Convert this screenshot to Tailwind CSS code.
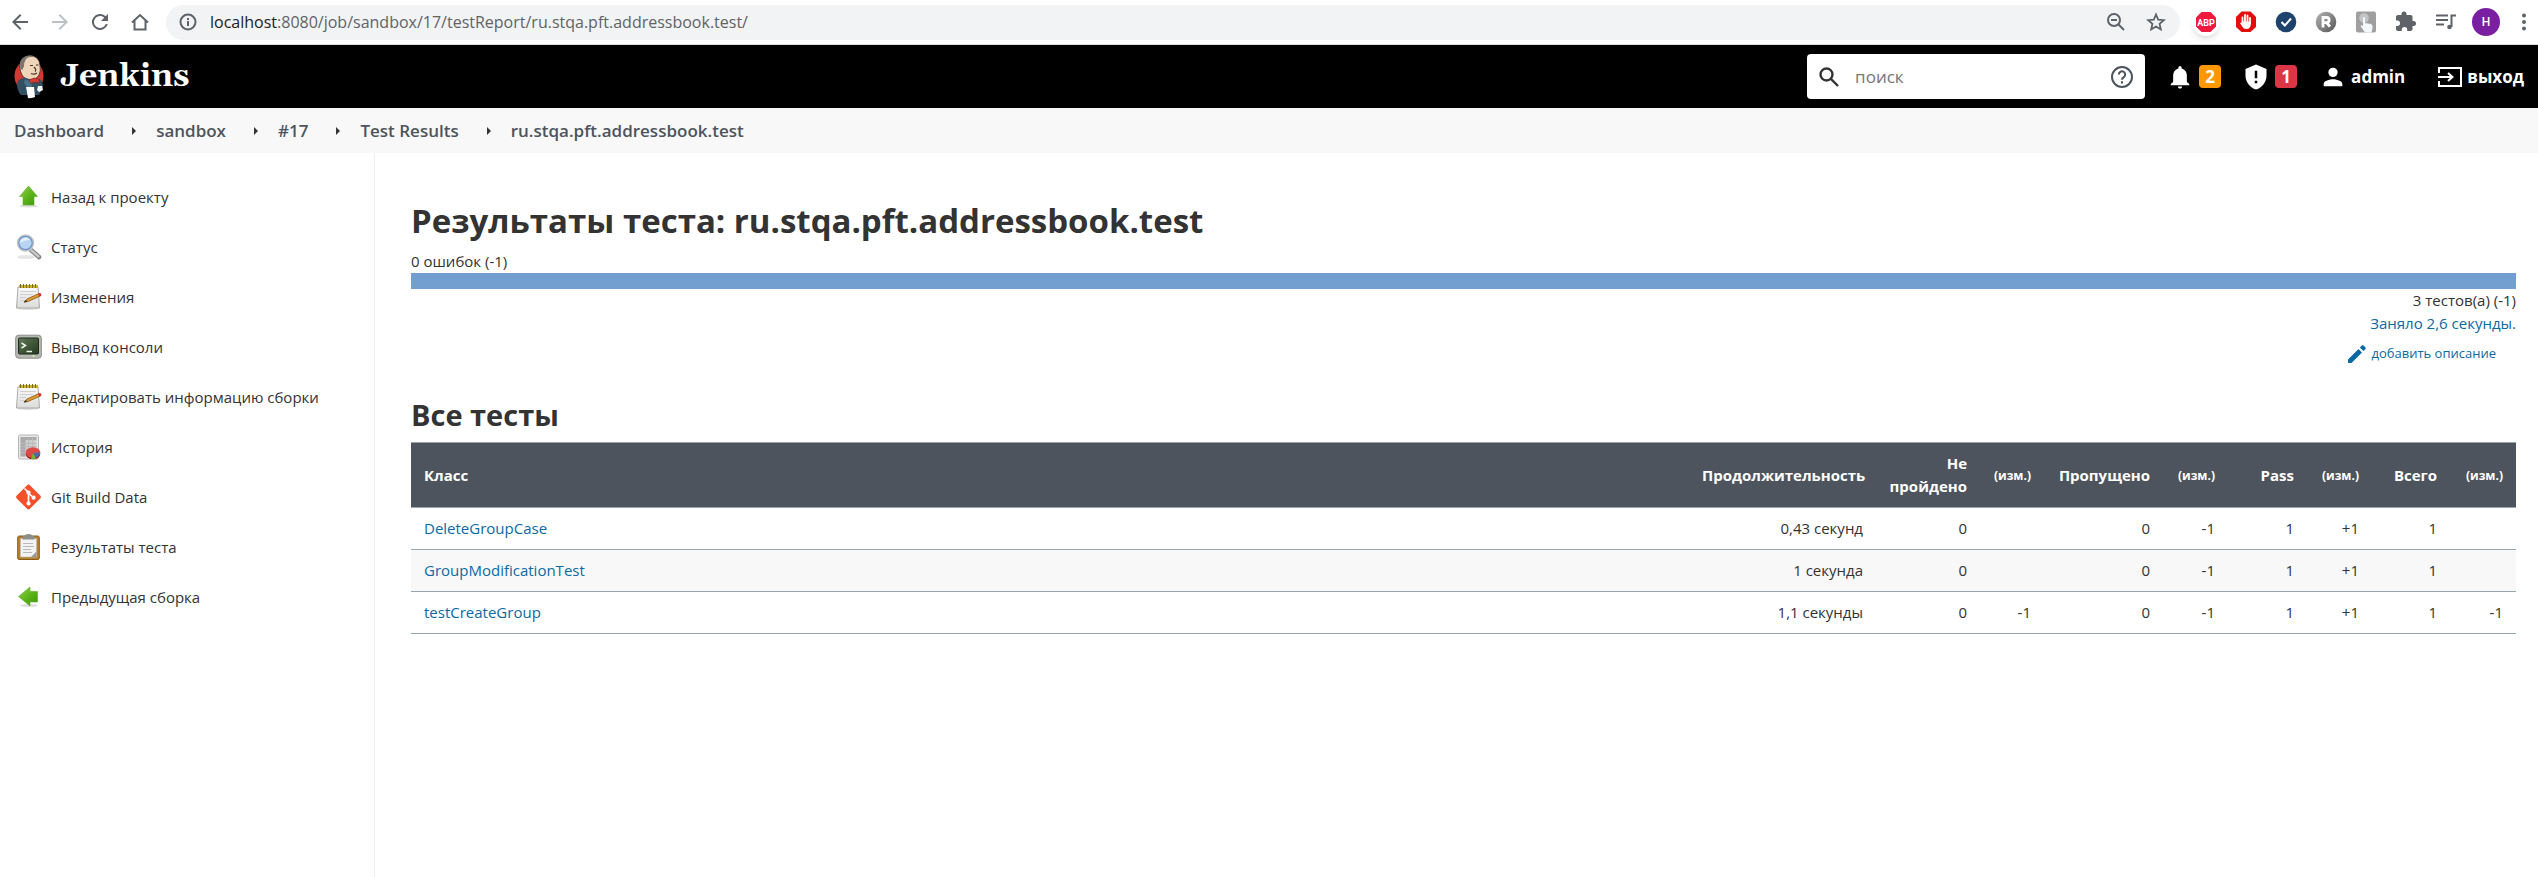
<!DOCTYPE html>
<html lang="ru">
<head>
<meta charset="utf-8">
<title>Результаты теста: ru.stqa.pft.addressbook.test</title>
<script src="https://cdn.jsdelivr.net/npm/@tailwindcss/browser@4"></script>
</head>
<body class="flex min-h-screen flex-col bg-white font-['Open_Sans','Noto_Sans',sans-serif] text-[15px] text-[#333]">

<!-- Shared icons -->
<svg class="absolute size-0" aria-hidden="true">
  <defs>
    <linearGradient id="leaf" x1="0" y1="0" x2="1" y2="1"><stop offset="0" stop-color="#8fd050"/><stop offset=".5" stop-color="#5db51a"/><stop offset="1" stop-color="#3c930c"/></linearGradient>
    <linearGradient id="paper" x1="0" y1="0" x2="0" y2="1"><stop offset="0" stop-color="#fafafa"/><stop offset="1" stop-color="#dcdcdc"/></linearGradient>
    <linearGradient id="screen" x1="0" y1="0" x2="1" y2="1"><stop offset="0" stop-color="#62775a"/><stop offset=".5" stop-color="#41583a"/><stop offset="1" stop-color="#263a1f"/></linearGradient>
    <linearGradient id="grey" x1="0" y1="0" x2="1" y2="1"><stop offset="0" stop-color="#b5b5b5"/><stop offset="1" stop-color="#555"/></linearGradient>
    <symbol id="notepad" viewBox="0 0 27 27">
      <ellipse cx="13" cy="24.500" rx="11" ry="1.500" fill="#ddd"/>
      <path d="M3 3h20l1.500 21H1.500z" fill="url(#paper)" stroke="#a9a9a4"/>
      <path d="M4 1h19v3H4z" fill="#c9b22e"/>
      <path d="M5.500 0v4M8.500 0v4M11.500 0v4M14.500 0v4M17.500 0v4M20.500 0v4" stroke="#7d6b17"/>
      <path d="M5 7.500h16M5 10.500h13M5 13.500h6M5 16.500h5" stroke="#cfcfcf"/>
      <path d="M9 18l3-3 12-5.500 1.500 2.500-12.500 5.500z" fill="#dc9a35" stroke="#8b5a14" stroke-width=".8"/>
      <path d="M8.500 18.500l2.500-2.500 1 2z" fill="#333"/>
      <path d="M23 10l2-1q2 .6 1.300 2.600l-1.800 1z" fill="#e2262b"/>
    </symbol>
  </defs>
</svg>

<!-- Browser toolbar -->
<div class="flex h-[45px] shrink-0 items-center border-b border-[#dadce0] bg-white pr-[2px] pl-2 text-[#5f6368]">
  <div class="flex gap-4 pr-[14px]">
    <button class="grid size-6 place-items-center" aria-label="Назад"><svg class="size-6" viewBox="0 0 24 24" fill="currentColor"><path d="M20 11H7.800l5.600-5.600L12 4l-8 8 8 8 1.400-1.400L7.800 13H20z"/></svg></button>
    <button class="grid size-6 place-items-center text-[#bdc1c6]" aria-label="Вперёд"><svg class="size-6" viewBox="0 0 24 24" fill="currentColor"><path d="M4 11h12.200l-5.600-5.600L12 4l8 8-8 8-1.400-1.400 5.600-5.600H4z"/></svg></button>
    <button class="grid size-6 place-items-center" aria-label="Обновить"><svg class="size-6" viewBox="0 0 24 24" fill="currentColor"><path d="M17.650 6.350A8 8 0 1 0 19.730 14h-2.080A6 6 0 1 1 12 6c1.660 0 3.140.69 4.220 1.780L13 11h7V4z"/></svg></button>
    <button class="grid size-6 place-items-center" aria-label="Домой"><svg class="size-6" viewBox="0 0 24 24" fill="none" stroke="currentColor" stroke-width="2"><path d="M6.500 10.500V19.500h11v-9M4 12.500L12 5l8 7.500"/></svg></button>
  </div>
  <div class="flex h-[35px] grow items-center rounded-full bg-[#f1f3f4] px-3">
    <svg class="mr-3 size-5" viewBox="0 0 20 20" fill="none" stroke="currentColor" stroke-width="2"><circle cx="10" cy="10" r="7.500"/><path d="M10 9v5M10 6v2"/></svg>
    <p class="grow text-[16px]"><span class="text-[#202124]">localhost</span>:8080/job/sandbox/17/testReport/ru.stqa.pft.addressbook.test/</p>
    <button class="mr-4 grid size-6 place-items-center" aria-label="Масштаб"><svg class="size-6" viewBox="0 0 24 24" fill="none" stroke="currentColor" stroke-width="2"><circle cx="10" cy="10" r="6"/><path d="M14.500 14.500L20 20M7 10h6"/></svg></button>
    <button class="grid size-6 place-items-center" aria-label="Добавить в закладки"><svg class="size-6" viewBox="0 0 24 24" fill="none" stroke="currentColor" stroke-width="1.800"><path d="M12 4.500l2.200 5.200 5.600.5-4.200 3.700 1.200 5.500-4.800-2.900-4.800 2.900 1.200-5.500-4.200-3.700 5.600-.5z"/></svg></button>
  </div>
  <div class="flex items-center gap-3 pl-3">
    <button class="grid size-7 place-items-center rounded-full bg-white shadow-md" aria-label="Adblock Plus"><svg class="size-6" viewBox="0 0 24 24"><path d="M7.500 2h9L22 7.500v9L16.500 22h-9L2 16.500v-9z" fill="#f1183f"/><text x="12" y="15.500" text-anchor="middle" fill="#fff" class="font-['Roboto'] text-[9px] font-bold">ABP</text></svg></button>
    <button class="grid size-7 place-items-center" aria-label="AdBlock"><svg class="size-6" viewBox="0 0 24 24"><path d="M7.500 1.500h9L22 7v10l-5.500 5h-9L2 17V7z" fill="#e40d0d"/><path d="M8.500 13V7.500M11 12V5M13.500 12V5.500M16 13V8" stroke="#fff" stroke-width="1.800" stroke-linecap="round"/><path d="M7.600 11.500h9.300v2.500q-.4 5-4.500 5-3 0-4.200-2.500L6 13q1-.8 1.800.6z" fill="#fff"/></svg></button>
    <button class="grid size-7 place-items-center" aria-label="Проверка"><svg class="size-6" viewBox="0 0 24 24"><circle cx="12" cy="12" r="10.300" fill="#1d426c"/><path d="M7.500 12l3.300 3.500L17 8.500" fill="none" stroke="#fff" stroke-width="2"/></svg></button>
    <button class="grid size-7 place-items-center" aria-label="Расширение R"><svg class="size-6" viewBox="0 0 24 24"><circle cx="12" cy="12" r="10.300" fill="url(#grey)"/><path d="M9 17.500V7.500h3.500a2.600 2.600 0 0 1 0 5.200H9m3.500 0l3.500 4" fill="none" stroke="#fff" stroke-width="2.800"/></svg></button>
    <button class="grid size-7 place-items-center" aria-label="Кликер"><svg class="size-6" viewBox="0 0 24 24"><rect x="2" y="1.500" width="20" height="21" rx="2" fill="#9f9f9f"/><circle cx="10" cy="8" r="4.800" fill="#c4c4c4"/><path d="M9 7.500q1.200-1 2 0V13l6 1q2 1 1.500 4l-1 4.500H11L6.500 16q1-1.500 2.500 0z" fill="#f4f8fb"/></svg></button>
    <button class="grid size-7 place-items-center" aria-label="Расширения"><svg class="size-6" viewBox="0 0 24 24" fill="currentColor"><path d="M19.500 11H18.500V7c0-1.100-.9-2-2-2h-4V4a2.500 2.500 0 0 0-5 0v1h-3.500c-1.100 0-2 .9-2 2v3.500h1.300a2.700 2.700 0 0 1 0 5.400H2V19c0 1.100.9 2 2 2h3.800v-1.300a2.700 2.700 0 0 1 5.400 0V21h3.300c1.100 0 2-.9 2-2v-3h1a2.500 2.500 0 0 0 0-5z"/></svg></button>
    <button class="grid size-7 place-items-center" aria-label="Медиа"><svg class="size-6" viewBox="0 0 24 24" fill="none" stroke="currentColor" stroke-width="2"><path d="M2 5.500h12M2 10h12M2 14.500h8M17.500 17V5.500H22"/><circle cx="15.500" cy="17" r="2.300" fill="currentColor" stroke="none"/></svg></button>
    <button class="grid size-7 place-items-center rounded-full bg-[#7b1fa2] font-['Roboto'] text-[12px] font-medium text-white" aria-label="Профиль">H</button>
    <button class="grid size-6 place-items-center" aria-label="Меню"><svg class="size-6" viewBox="0 0 24 24" fill="currentColor"><circle cx="12" cy="5.500" r="2"/><circle cx="12" cy="12" r="2"/><circle cx="12" cy="18.500" r="2"/></svg></button>
  </div>
</div>

<!-- Jenkins header -->
<header class="flex h-[63px] shrink-0 items-center bg-black pr-[14px] pl-3 text-white">
  <a href="#" class="flex items-center gap-3">
    <svg class="h-11 w-9" viewBox="0 0 36 44">
      <ellipse cx="17" cy="21" rx="14.500" ry="16" fill="#d33833"/>
      <path d="M10 20Q6 12 9 6q4-6 11-5 7 1 8 9 1 6-1 10-3 5-8 5-6 0-9-5z" fill="#efd6b9" stroke="#3a302a" stroke-width=".8"/>
      <path d="M8.500 14Q6 5 13 1.500q6-2 10 .5-6-1-9 2-2 3-2 8-1 0-1.500 3z" fill="#7d7670"/>
      <path d="M18 10.500h3M24 10h2.500M22 12q3 3 1 4.500M19 18.500q3 1.500 6-.5" fill="none" stroke="#4d3527" stroke-width="1.200"/>
      <path d="M5 29q0-5 8-6.500l9 3.500 6-2q3 3 3 8l-4 8H9q-4-4-4-11z" fill="#335061"/>
      <path d="M13 24l7 3-1 10-7-9z" fill="#49728b"/>
      <path d="M17 25l5-2 5 1v4l-4-1-4 1.500z" fill="#d33833" stroke="#81201d" stroke-width=".6"/>
      <path d="M14 32h8l1 10q-3 1.500-7 1z" fill="#fff"/>
      <path d="M26 31h4l1 4-4 2-2-2z" fill="#f2f2f2"/>
    </svg>
    <span class="font-['Gelasio','DejaVu_Serif',serif] text-[32px] leading-none font-bold">Jenkins</span>
  </a>
  <form class="ml-auto flex h-[45px] w-[338px] items-center rounded bg-white px-3" role="search">
    <svg class="mr-4 size-5 text-[#333]" viewBox="0 0 20 20" fill="none" stroke="currentColor" stroke-width="2.400"><circle cx="7.500" cy="7.500" r="6"/><path d="M12 12l7 7"/></svg>
    <input type="text" placeholder="поиск" aria-label="поиск" class="w-0 grow text-[17px] text-[#333] outline-none placeholder:text-[#757575]">
    <a href="#" aria-label="Справка" class="text-[#4d545d]"><svg class="size-[22px]" viewBox="0 0 22 22" fill="none" stroke="currentColor" stroke-width="2"><circle cx="11" cy="11" r="10"/><path d="M7.800 8.600a3.200 3.200 0 1 1 5 2.600q-1.800 1.200-1.800 2.600M11 15.300v2.200"/></svg></a>
  </form>
  <a href="#" class="ml-5 flex items-center gap-1" aria-label="Уведомления">
    <svg class="size-[30px]" viewBox="0 0 24 24" fill="currentColor"><path d="M12 21.200c1 0 1.700-.7 1.700-1.700h-3.400c0 1 .7 1.700 1.700 1.700zm5.500-5.200v-5c0-3-1.600-5.200-4.200-5.900v-.6a1.300 1.300 0 0 0-2.600 0v.6C8 5.800 6.500 8 6.500 11v5l-1.900 1.500v1h14.800v-1z"/></svg>
    <span class="grid h-[23px] w-[22px] place-items-center rounded bg-[#ff9800] text-[17px] leading-none font-bold">2</span>
  </a>
  <a href="#" class="ml-5 flex items-center gap-1" aria-label="Предупреждения безопасности">
    <svg class="size-[30px]" viewBox="0 0 24 24"><path d="M12 2L3.600 5.500V11c0 5 3.500 9.500 8.400 11 4.900-1.500 8.400-6 8.400-11V5.500z" fill="#fff"/><path d="M12 7v6M12 15v2" stroke="#000" stroke-width="2"/></svg>
    <span class="grid h-[23px] w-[22px] place-items-center rounded bg-[#dc3545] text-[17px] leading-none font-bold">1</span>
  </a>
  <a href="#" class="ml-[22px] flex items-center gap-1 text-[17px] font-bold">
    <svg class="size-[28px]" viewBox="0 0 24 24" fill="currentColor"><path d="M12 12a4 4 0 1 0 0-8 4 4 0 0 0 0 8zm0 2c-2.700 0-8 1.300-8 4v2h16v-2c0-2.700-5.300-4-8-4z"/></svg>admin
  </a>
  <a href="#" class="ml-8 flex items-center gap-1 text-[17px] font-bold">
    <svg class="h-[22px] w-[26px]" viewBox="0 0 26 22" fill="none" stroke="currentColor" stroke-width="2"><path d="M2 7V2h22v18H2v-5M1 11h14M11 7l4.500 4-4.500 4"/></svg>выход
  </a>
</header>

<!-- Breadcrumbs -->
<nav aria-label="Навигация" class="flex h-[45px] shrink-0 items-center bg-[#f8f8f8] px-[14px] text-[17px] font-semibold text-[#4d545d]">
  <a href="#">Dashboard</a>
  <svg class="mr-[19px] ml-[27px] h-2 w-[6px]" viewBox="0 0 6 8"><path d="M1 0l4 4-4 4z" fill="#333"/></svg>
  <a href="#">sandbox</a>
  <svg class="mr-[19px] ml-[27px] h-2 w-[6px]" viewBox="0 0 6 8"><path d="M1 0l4 4-4 4z" fill="#333"/></svg>
  <a href="#">#17</a>
  <svg class="mr-[19px] ml-[27px] h-2 w-[6px]" viewBox="0 0 6 8"><path d="M1 0l4 4-4 4z" fill="#333"/></svg>
  <a href="#">Test Results</a>
  <svg class="mr-[19px] ml-[27px] h-2 w-[6px]" viewBox="0 0 6 8"><path d="M1 0l4 4-4 4z" fill="#333"/></svg>
  <a href="#">ru.stqa.pft.addressbook.test</a>
</nav>

<div class="flex grow">
  <!-- Side panel -->
  <aside class="w-[375px] shrink-0 border-r border-[#eaeff2] pt-[19px]">
    <ul class="font-medium">
      <li><a href="#" class="flex h-[50px] items-center gap-[9px] pl-[15px]">
        <svg class="size-[27px] shrink-0" viewBox="0 0 27 27"><ellipse cx="13.500" cy="22" rx="9" ry="1.500" fill="#ddd"/><path d="M13.500 2L22.500 12.500h-3.500V21H8v-8.500H4.500z" fill="url(#leaf)" stroke="#5fae2b" stroke-width=".6"/></svg>Назад к проекту</a></li>
      <li><a href="#" class="flex h-[50px] items-center gap-[9px] pl-[15px]">
        <svg class="size-[27px] shrink-0" viewBox="0 0 27 27"><ellipse cx="11" cy="23" rx="9" ry="2" fill="#e6e6e6"/><path d="M16 16l8 7" stroke="#7f7f7f" stroke-width="4.500" stroke-linecap="round"/><path d="M16.500 16.500l7 6" stroke="#c8c8c8" stroke-width="2.500" stroke-linecap="round"/><circle cx="10.500" cy="9" r="8" fill="#b9d4f2" stroke="#c4c4c4" stroke-width="1.500"/><circle cx="10.500" cy="9" r="6.700" fill="none" stroke="#6e93c8" stroke-width="1.200"/><path d="M5 9a5.500 5.500 0 0 1 10-3Q9 6 5 9z" fill="#e6f0fb"/></svg>Статус</a></li>
      <li><a href="#" class="flex h-[50px] items-center gap-[9px] pl-[15px]"><svg class="size-[27px] shrink-0"><use href="#notepad"/></svg>Изменения</a></li>
      <li><a href="#" class="flex h-[50px] items-center gap-[9px] pl-[15px]">
        <svg class="size-[27px] shrink-0" viewBox="0 0 27 27"><rect x=".7" y="1.200" width="25.600" height="23" rx="3" fill="#b5b7b2" stroke="#8b8d88"/><rect x="3.500" y="4" width="20" height="16" rx="1" fill="url(#screen)" stroke="#1d2a19"/><path d="M6.500 9l4 2.500-4 2.500M11.500 17.500H17" fill="none" stroke="#eef5ea" stroke-width="1.500"/><circle cx="18.500" cy="22" r="1" fill="#e8f5b0"/></svg>Вывод консоли</a></li>
      <li><a href="#" class="flex h-[50px] items-center gap-[9px] pl-[15px]"><svg class="size-[27px] shrink-0"><use href="#notepad"/></svg>Редактировать информацию сборки</a></li>
      <li><a href="#" class="flex h-[50px] items-center gap-[9px] pl-[15px]">
        <svg class="size-[27px] shrink-0" viewBox="0 0 27 27"><rect x="3.500" y="1" width="20" height="24" rx="1.500" fill="#e8e8e8" stroke="#b5b5b5"/><path d="M5.500 3h16v19.500h-16z" fill="#cdcdcd"/><path d="M5.500 3h16v3h-16zM5.500 3h5v19.500h-5z" fill="#aaa"/><path d="M5.500 9.500h16M5.500 12.500h16M5.500 15.500h16M5.500 18.500h16M13.500 4v18M17.500 4v18" stroke="#bbb"/><ellipse cx="18" cy="20" rx="7.300" ry="5.300" fill="#a91515"/><ellipse cx="18" cy="18.500" rx="7.300" ry="5.200" fill="#e04848"/><path d="M18 19l7-.5q0 4-4 5z" fill="#3f6fb5"/><path d="M18 19l3 5.500q-3 1-5 .3z" fill="#6cb52d"/></svg>История</a></li>
      <li><a href="#" class="flex h-[50px] items-center gap-[9px] pl-[15px]">
        <svg class="size-[27px] shrink-0" viewBox="0 0 27 27"><rect x="4.200" y="3.700" width="18.600" height="18.600" rx="2" transform="rotate(45 13.500 13)" fill="#f4502a"/><path d="M9.500 4.500l4 4V20M13.500 9l5 5" fill="none" stroke="#fff" stroke-width="1.700"/><circle cx="13.500" cy="8.500" r="2.100" fill="#fff"/><circle cx="13.500" cy="19.500" r="2.100" fill="#fff"/><circle cx="18.600" cy="13.700" r="2.100" fill="#fff"/></svg>Git Build Data</a></li>
      <li><a href="#" class="flex h-[50px] items-center gap-[9px] pl-[15px]">
        <svg class="size-[27px] shrink-0" viewBox="0 0 27 27"><rect x="2.700" y="2" width="21.600" height="23.500" rx="1.500" fill="#b8812f" stroke="#8a5b17"/><path d="M5.500 4.500h16v18.500h-16z" fill="#f3f3f3" stroke="#bbb" stroke-width=".6"/><path d="M7.500 3.700q0-1.700 2.500-2.200 0-1.500 3.500-1.500T17 1.500q2.500.5 2.500 2.200V5.500h-12z" fill="#8d8f8a"/><path d="M8 9.500h10M8 12.500h11M8 15.500h8M8 18.500h9" stroke="#b9b9b9"/><path d="M16 23l5.500-5.500V23z" fill="#999"/></svg>Результаты теста</a></li>
      <li><a href="#" class="flex h-[50px] items-center gap-[9px] pl-[15px]">
        <svg class="size-[27px] shrink-0" viewBox="0 0 27 27"><ellipse cx="14" cy="21.500" rx="9" ry="1.500" fill="#ddd"/><path d="M3.500 12.500L15 3v4.500h7.500V18H15v4z" fill="url(#leaf)" stroke="#5fae2b" stroke-width=".6"/></svg>Предыдущая сборка</a></li>
    </ul>
  </aside>

  <!-- Report -->
  <main class="min-w-0 grow pt-[44px] pr-[22px] pl-9">
    <h1 class="text-[33px] leading-[48px] font-bold">Результаты теста: ru.stqa.pft.addressbook.test</h1>
    <p class="mt-[5px] leading-[23px]">0 ошибок (-1)</p>
    <div class="h-4 bg-[#729fcf]" role="img" aria-label="Все тесты пройдены"></div>
    <div class="flex flex-col items-end">
      <p class="leading-[23px]">3 тестов(а) (-1)</p>
      <a href="#" class="leading-[23px] font-medium text-[#0b6aa2]">Заняло 2,6 секунды.</a>
      <a href="#" class="mt-1 mr-5 flex h-[29px] items-center gap-1 text-[13px] font-medium text-[#0b6aa2]"><svg class="size-5" viewBox="0 0 20 20" fill="currentColor"><path d="M1 15.500V19h3.500L15 8.500 11.500 5zM18.500 5q.8-.8 0-1.600l-2-2q-.8-.8-1.600 0L12.800 3.500l3.600 3.600z"/></svg>добавить описание</a>
    </div>
    <h2 class="mt-[27px] text-[29px] leading-[40px] font-bold">Все тесты</h2>
    <table class="mt-[7px] w-full table-fixed border-collapse text-right">
      <colgroup><col><col class="w-[187px]"><col class="w-[104px]"><col class="w-[64px]"><col class="w-[119px]"><col class="w-[65px]"><col class="w-[79px]"><col class="w-[65px]"><col class="w-[78px]"><col class="w-[66px]"></colgroup>
      <thead>
        <tr class="h-[65px] border-y border-[#98a5ae] bg-[#4d545d] leading-[23px] text-white">
          <th class="px-[13px] text-left">Класс</th>
          <th class="px-[13px]">Продолжительность</th>
          <th class="px-[13px]">Не пройдено</th>
          <th class="px-[13px] text-[12px]">(изм.)</th>
          <th class="px-[13px]">Пропущено</th>
          <th class="px-[13px] text-[12px]">(изм.)</th>
          <th class="px-[13px]">Pass</th>
          <th class="px-[13px] text-[12px]">(изм.)</th>
          <th class="px-[13px]">Всего</th>
          <th class="px-[13px] text-[12px]">(изм.)</th>
        </tr>
      </thead>
      <tbody>
        <tr class="h-[42px] border-b border-[#98a5ae]">
          <td class="px-[13px] text-left"><a href="#" class="font-medium text-[#0b6aa2]">DeleteGroupCase</a></td>
          <td class="px-[13px]">0,43 секунд</td><td class="px-[13px]">0</td><td class="px-[13px]"></td><td class="px-[13px]">0</td><td class="px-[13px]">-1</td><td class="px-[13px]">1</td><td class="px-[13px]">+1</td><td class="px-[13px]">1</td><td class="px-[13px]"></td>
        </tr>
        <tr class="h-[42px] border-b border-[#98a5ae] bg-[#f8f8f8]">
          <td class="px-[13px] text-left"><a href="#" class="font-medium text-[#0b6aa2]">GroupModificationTest</a></td>
          <td class="px-[13px]">1 секунда</td><td class="px-[13px]">0</td><td class="px-[13px]"></td><td class="px-[13px]">0</td><td class="px-[13px]">-1</td><td class="px-[13px]">1</td><td class="px-[13px]">+1</td><td class="px-[13px]">1</td><td class="px-[13px]"></td>
        </tr>
        <tr class="h-[42px] border-b border-[#98a5ae]">
          <td class="px-[13px] text-left"><a href="#" class="font-medium text-[#0b6aa2]">testCreateGroup</a></td>
          <td class="px-[13px]">1,1 секунды</td><td class="px-[13px]">0</td><td class="px-[13px]">-1</td><td class="px-[13px]">0</td><td class="px-[13px]">-1</td><td class="px-[13px]">1</td><td class="px-[13px]">+1</td><td class="px-[13px]">1</td><td class="px-[13px]">-1</td>
        </tr>
      </tbody>
    </table>
  </main>
</div>
</body>
</html>
